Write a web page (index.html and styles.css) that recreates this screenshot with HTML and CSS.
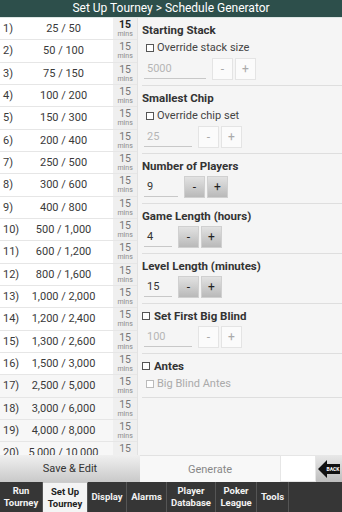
FILE: index.html
```html
<!DOCTYPE html>
<html>
<head>
<meta charset="utf-8">
<link rel="stylesheet" href="styles.css">
</head>
<body>
<div class="app">
  <div class="title">Set Up Tourney &gt; Schedule Generator</div>
  <div class="main">
    <div class="list">
      <div class="row"><span class="num">1)</span><span class="val">25 / 50</span><span class="mins first"><b>15</b><i>mins</i></span></div>
      <div class="row"><span class="num">2)</span><span class="val">50 / 100</span><span class="mins"><b>15</b><i>mins</i></span></div>
      <div class="row"><span class="num">3)</span><span class="val">75 / 150</span><span class="mins"><b>15</b><i>mins</i></span></div>
      <div class="row"><span class="num">4)</span><span class="val">100 / 200</span><span class="mins"><b>15</b><i>mins</i></span></div>
      <div class="row"><span class="num">5)</span><span class="val">150 / 300</span><span class="mins"><b>15</b><i>mins</i></span></div>
      <div class="row"><span class="num">6)</span><span class="val">200 / 400</span><span class="mins"><b>15</b><i>mins</i></span></div>
      <div class="row"><span class="num">7)</span><span class="val">250 / 500</span><span class="mins"><b>15</b><i>mins</i></span></div>
      <div class="row"><span class="num">8)</span><span class="val">300 / 600</span><span class="mins"><b>15</b><i>mins</i></span></div>
      <div class="row"><span class="num">9)</span><span class="val">400 / 800</span><span class="mins"><b>15</b><i>mins</i></span></div>
      <div class="row"><span class="num">10)</span><span class="val">500 / 1,000</span><span class="mins"><b>15</b><i>mins</i></span></div>
      <div class="row"><span class="num">11)</span><span class="val">600 / 1,200</span><span class="mins"><b>15</b><i>mins</i></span></div>
      <div class="row"><span class="num">12)</span><span class="val">800 / 1,600</span><span class="mins"><b>15</b><i>mins</i></span></div>
      <div class="row"><span class="num">13)</span><span class="val">1,000 / 2,000</span><span class="mins"><b>15</b><i>mins</i></span></div>
      <div class="row"><span class="num">14)</span><span class="val">1,200 / 2,400</span><span class="mins"><b>15</b><i>mins</i></span></div>
      <div class="row"><span class="num">15)</span><span class="val">1,300 / 2,600</span><span class="mins"><b>15</b><i>mins</i></span></div>
      <div class="row"><span class="num">16)</span><span class="val">1,500 / 3,000</span><span class="mins"><b>15</b><i>mins</i></span></div>
      <div class="row dim"><span class="num">17)</span><span class="val">2,500 / 5,000</span><span class="mins"><b>15</b><i>mins</i></span></div>
      <div class="row dim"><span class="num">18)</span><span class="val">3,000 / 6,000</span><span class="mins"><b>15</b><i>mins</i></span></div>
      <div class="row dim"><span class="num">19)</span><span class="val">4,000 / 8,000</span><span class="mins"><b>15</b><i>mins</i></span></div>
      <div class="row dim"><span class="num">20)</span><span class="val">5,000 / 10,000</span><span class="mins"><b>15</b><i>mins</i></span></div>
    </div>
    <div class="panel">
      <div class="sec">
        <div class="head">Starting Stack</div>
        <div class="check"><span class="box"></span>Override stack size</div>
        <div class="inrow"><span class="input w62 off">5000</span><span class="btn off">-</span><span class="btn off">+</span></div>
      </div>
      <div class="sec">
        <div class="head">Smallest Chip</div>
        <div class="check"><span class="box"></span>Override chip set</div>
        <div class="inrow"><span class="input w48 off">25</span><span class="btn off">-</span><span class="btn off">+</span></div>
      </div>
      <div class="sec">
        <div class="head">Number of Players</div>
        <div class="inrow"><span class="input w34">9</span><span class="btn">-</span><span class="btn">+</span></div>
      </div>
      <div class="sec">
        <div class="head">Game Length (hours)</div>
        <div class="inrow"><span class="input w28">4</span><span class="btn">-</span><span class="btn">+</span></div>
      </div>
      <div class="sec">
        <div class="head">Level Length (minutes)</div>
        <div class="inrow"><span class="input w28">15</span><span class="btn">-</span><span class="btn">+</span></div>
      </div>
      <div class="sec">
        <div class="head"><span class="box"></span>Set First Big Blind</div>
        <div class="inrow"><span class="input w48 off">100</span><span class="btn off">-</span><span class="btn off">+</span></div>
      </div>
      <div class="sec last">
        <div class="head"><span class="box"></span>Antes</div>
        <div class="check dis"><span class="box"></span>Big Blind Antes</div>
      </div>
    </div>
  </div>
  <div class="actions">
    <div class="save">Save &amp; Edit</div>
    <div class="gen">Generate</div>
    <div class="blank"></div>
    <div class="back">
      <svg width="24" height="22" viewBox="0 0 24 22">
        <polygon points="1,11 10,2 10,6 23,6 23,16 10,16 10,20" fill="#111"/>
        <text x="16" y="13" font-size="5" font-family="Roboto, sans-serif" font-weight="700" fill="#fff" text-anchor="middle">BACK</text>
      </svg>
    </div>
  </div>
  <div class="tabs">
    <div class="tab t1">Run<br>Tourney</div>
    <div class="tab t2 active">Set Up<br>Tourney</div>
    <div class="tab t3">Display</div>
    <div class="tab t4">Alarms</div>
    <div class="tab t5">Player<br>Database</div>
    <div class="tab t6">Poker<br>League</div>
    <div class="tab t7">Tools</div>
    <div class="tab t8"></div>
  </div>
</div>
</body>
</html>
```

FILE: styles.css
```css
* { box-sizing: border-box; }
html, body { margin: 0; padding: 0; }
body { font-family: Roboto, "Noto Sans", sans-serif; background: #f5f5f5; }
.app { width: 342px; height: 512px; display: flex; flex-direction: column; overflow: hidden; }
.title { height: 18px; line-height: 17px; background: #2d4f4b; color: #fff; text-align: center; font-size: 12px; border-bottom: 1px solid #dde6e4; flex: none; }
.main { flex: 1; display: flex; min-height: 0; }
.list { width: 138px; flex: none; overflow: hidden; background: #fff; border-right: 1px solid #e2e2e2; }
.row { height: 22.33px; display: flex; align-items: center; border-bottom: 1px solid #e6e6e6; font-size: 11px; color: #3a3a3a; }
.row.dim { background: #f7f7f7; }
.num { width: 20px; padding-left: 3px; white-space: nowrap; }
.val { width: 94px; padding-right: 6px; text-align: center; white-space: nowrap; }
.mins { width: 24px; height: 100%; background: #efefef; display: flex; flex-direction: column; align-items: center; justify-content: center; color: #777; }
.mins b { font-weight: 400; font-size: 10.5px; line-height: 11px; }
.mins i { font-style: normal; font-size: 7px; line-height: 8px; color: #8a8a8a; }
.mins.first b { font-weight: 700; color: #222; }
.panel { flex: 1; background: #f5f5f5; padding-left: 4px; }
.sec { padding-top: 4px; padding-bottom: 5px; border-bottom: 1px solid #dedede; }
.head { height: 16px; line-height: 16px; font-size: 11.5px; font-weight: 700; color: #333; display: flex; align-items: center; }
.check { height: 16px; line-height: 16px; font-size: 11px; color: #444; display: flex; align-items: center; margin-top: 2px; padding-left: 4px; }
.check.dis { color: #aaa; }
.box { width: 8px; height: 8px; border: 1px solid #555; margin-right: 3px; flex: none; background: #fff; }
.head .box { margin-right: 4px; }
.check.dis .box { border-color: #bbb; }
.inrow { display: flex; align-items: center; margin-top: 2px; height: 22px; }
.input { height: 20px; line-height: 20px; font-size: 11px; color: #333; padding-left: 3px; border-bottom: 1px solid #c8c8c8; margin-right: 6px; margin-left: 2px; }
.input.off { color: #b5b5b5; }
.w62 { width: 62px; }
.w48 { width: 48px; }
.w34 { width: 34px; }
.w28 { width: 28px; }
.btn { width: 21px; height: 22px; margin-right: 2px; display: flex; align-items: center; justify-content: center; font-size: 12px; color: #222; background: linear-gradient(#e2e2e2, #b9b9b9); border: 1px solid #d0d0d0; }
.btn.off { background: #fbfbfb; border: 1px solid #e4e4e4; color: #aaa; }
.actions { height: 27px; flex: none; display: flex; margin-top: -3px; position: relative; }
.save { width: 140px; display: flex; align-items: center; justify-content: center; font-size: 11px; color: #333; background: linear-gradient(#f0f0f0, #c9c9c9); }
.gen { width: 140px; display: flex; align-items: center; justify-content: center; font-size: 11px; color: #888; background: #f8f8f8; border-top: 1px solid #e2e2e2; }
.blank { width: 36px; background: #fff; border: 1px solid #e6e6e6; }
.back { flex: 1; display: flex; align-items: center; justify-content: center; background: linear-gradient(#e8e8e8, #bdbdbd); }
.tabs { height: 30px; flex: none; display: flex; background: #363636; }
.tab { display: flex; align-items: center; justify-content: center; text-align: center; font-size: 9.5px; line-height: 12px; font-weight: 700; color: #f2f2f2; border-right: 1px solid #555; }
.tab.active { background: #f4f4f4; color: #222; border-top: 1px solid #ccc; }
.t1 { width: 43px; }
.t2 { width: 45px; }
.t3 { width: 39px; }
.t4 { width: 40px; }
.t5 { width: 49px; }
.t6 { width: 41px; }
.t7 { width: 32px; }
.t8 { flex: 1; border-right: none; }
```
